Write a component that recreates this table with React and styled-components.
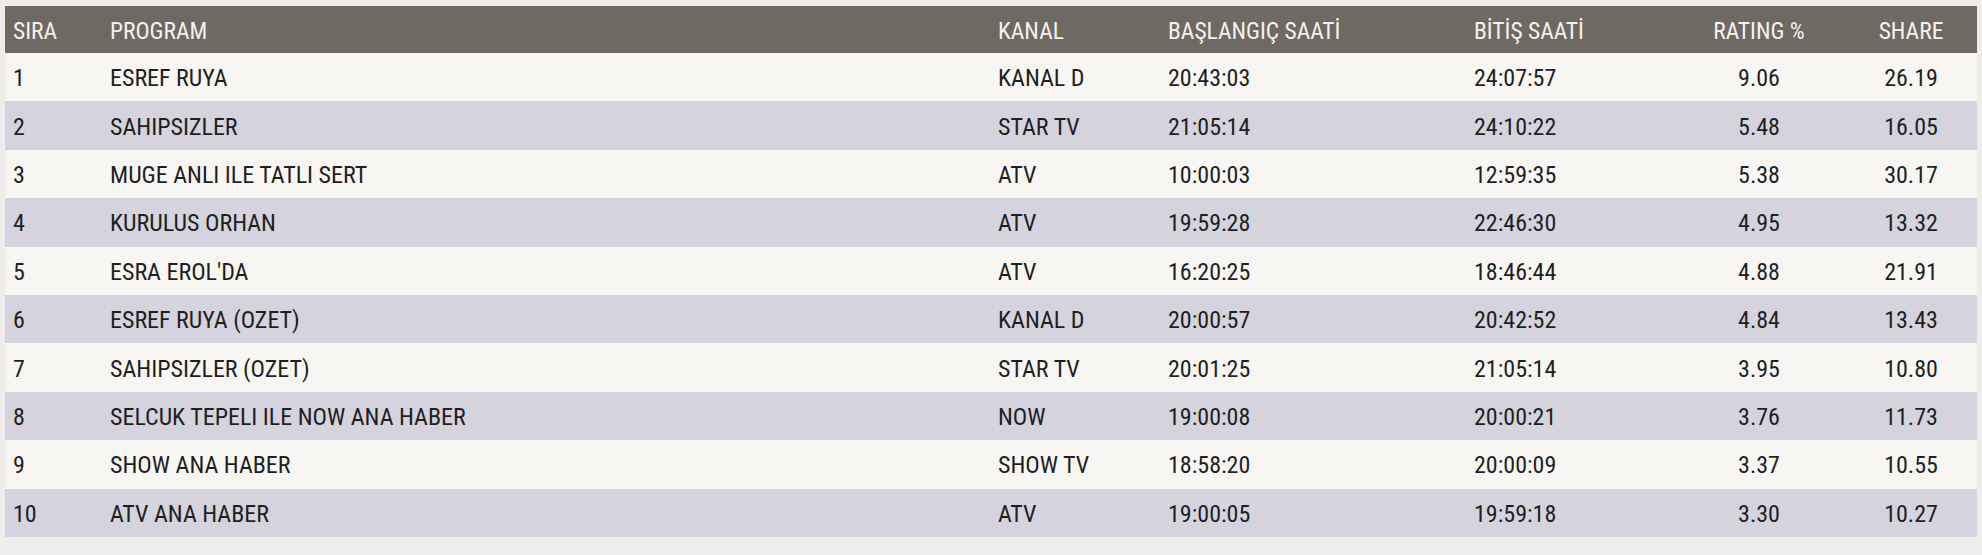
import React from 'react';
import styled, { createGlobalStyle } from 'styled-components';

const GlobalStyle = createGlobalStyle`
  body {
    margin: 0;
    padding: 6px 5px 0 5px;
    background: #efedec;
    font-family: 'Roboto Condensed', 'Liberation Sans Narrow', 'DejaVu Sans Condensed', sans-serif;
  }
`;

const Table = styled.table`
  width: 1972px;
  border-collapse: collapse;
  table-layout: fixed;
  color: #1f1f1f;
`;

const HeadRow = styled.tr`
  background: #6f6963;
  height: 47px;
`;

const HeadCell = styled.th`
  font-weight: 400;
  font-size: 23.5px;
  color: #f5f1ed;
  text-align: ${p => (p.center ? 'center' : 'left')};
  padding: 3px 0 0 ${p => (p.center ? '0' : '8px')};
  white-space: nowrap;
`;

const Row = styled.tr`
  background: ${p => (p.even ? '#d5d3de' : '#f8f6f3')};
  height: 48.4px;
`;

const Cell = styled.td`
  font-size: 24px;
  text-align: ${p => (p.center ? 'center' : 'left')};
  padding: 2px 0 0 ${p => (p.center ? '0' : '8px')};
  white-space: nowrap;
`;

const columns = [
  { title: 'SIRA', width: 97 },
  { title: 'PROGRAM', width: 888 },
  { title: 'KANAL', width: 170 },
  { title: 'BAŞLANGIÇ SAATİ', width: 306 },
  { title: 'BİTİŞ SAATİ', width: 207 },
  { title: 'RATING %', width: 172, center: true },
  { title: 'SHARE', width: 132, center: true },
];

const rows = [
  ['1', 'ESREF RUYA', 'KANAL D', '20:43:03', '24:07:57', '9.06', '26.19'],
  ['2', 'SAHIPSIZLER', 'STAR TV', '21:05:14', '24:10:22', '5.48', '16.05'],
  ['3', 'MUGE ANLI ILE TATLI SERT', 'ATV', '10:00:03', '12:59:35', '5.38', '30.17'],
  ['4', 'KURULUS ORHAN', 'ATV', '19:59:28', '22:46:30', '4.95', '13.32'],
  ['5', "ESRA EROL'DA", 'ATV', '16:20:25', '18:46:44', '4.88', '21.91'],
  ['6', 'ESREF RUYA (OZET)', 'KANAL D', '20:00:57', '20:42:52', '4.84', '13.43'],
  ['7', 'SAHIPSIZLER (OZET)', 'STAR TV', '20:01:25', '21:05:14', '3.95', '10.80'],
  ['8', 'SELCUK TEPELI ILE NOW ANA HABER', 'NOW', '19:00:08', '20:00:21', '3.76', '11.73'],
  ['9', 'SHOW ANA HABER', 'SHOW TV', '18:58:20', '20:00:09', '3.37', '10.55'],
  ['10', 'ATV ANA HABER', 'ATV', '19:00:05', '19:59:18', '3.30', '10.27'],
];

const App = () => {
  return (
    <>
      <GlobalStyle />
      <Table>
        <colgroup>
          {columns.map(c => (
            <col key={c.title} style={{ width: c.width }} />
          ))}
        </colgroup>
        <thead>
          <HeadRow>
            {columns.map(c => (
              <HeadCell key={c.title} center={c.center}>{c.title}</HeadCell>
            ))}
          </HeadRow>
        </thead>
        <tbody>
          {rows.map((r, i) => (
            <Row key={r[0]} even={i % 2 === 1}>
              {r.map((v, j) => (
                <Cell key={j} center={columns[j].center}>{v}</Cell>
              ))}
            </Row>
          ))}
        </tbody>
      </Table>
    </>
  );
};

export default App;
